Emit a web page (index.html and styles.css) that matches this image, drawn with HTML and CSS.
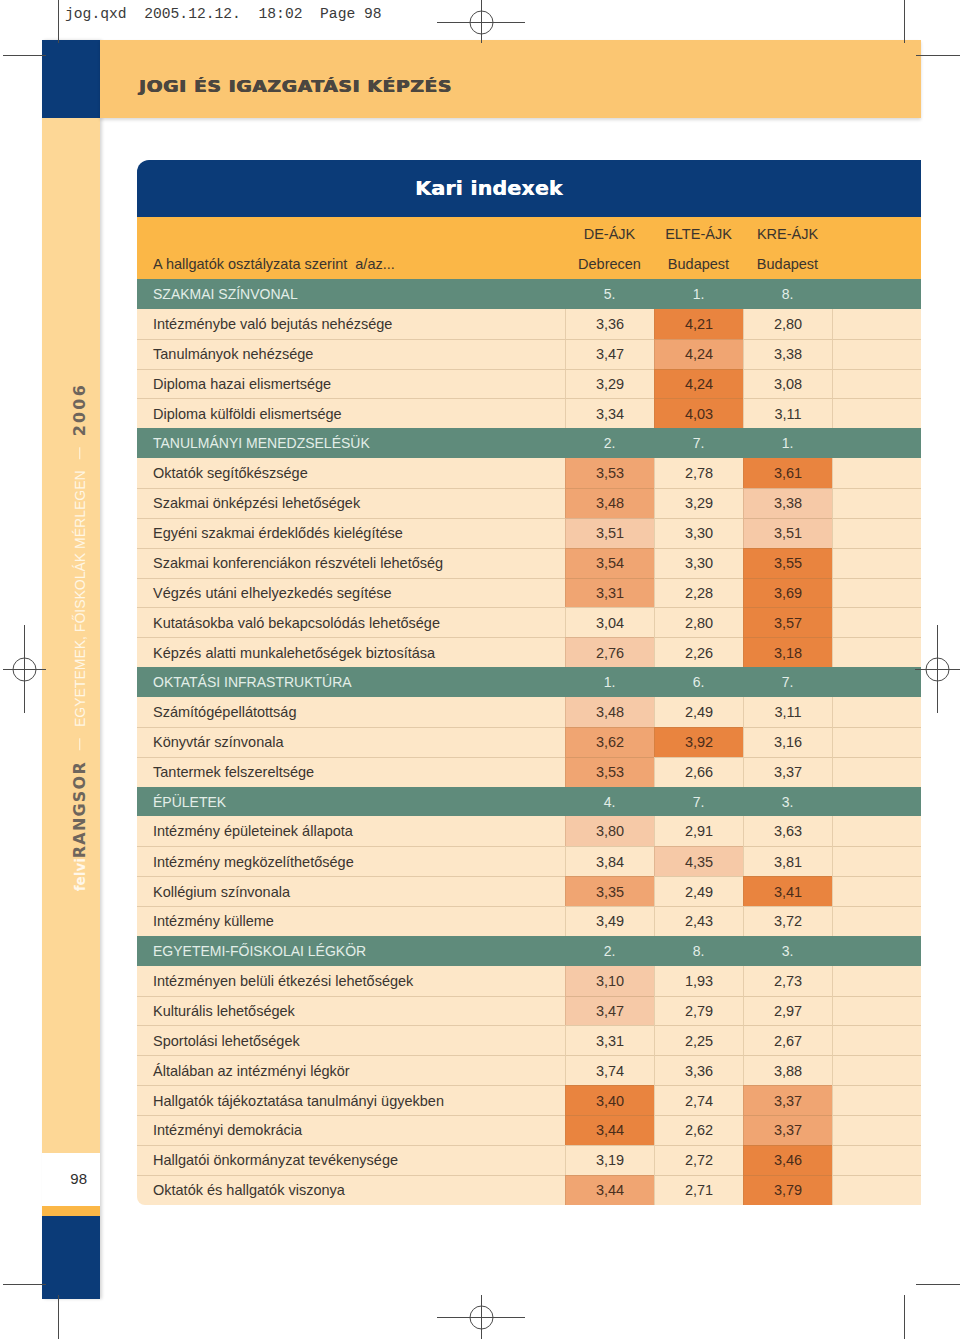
FILE: index.html
```html
<!DOCTYPE html>
<html lang="hu">
<head>
<meta charset="utf-8">
<title>Kari indexek</title>
<link rel="stylesheet" href="styles.css">
</head>
<body>
<div class="page">
  <div class="slug">jog.qxd  2005.12.12.  18:02  Page 98</div>
  <div class="layout">
    <aside class="sidebar">
      <div class="sb-cap"></div>
      <div class="sb-strip">
        <div class="sb-text"><span class="felvi">felvi</span><span class="rang">RANGSOR</span><span class="pipe"></span><span class="egy">EGYETEMEK, FŐISKOLÁK MÉRLEGEN</span><span class="pipe"></span><span class="yr">2006</span></div>
      </div>
      <div class="sb-page">98</div>
      <div class="sb-accent"></div>
      <div class="sb-foot"></div>
    </aside>
    <main class="main">
      <header class="banner"><h1>JOGI ÉS IGAZGATÁSI KÉPZÉS</h1></header>
      <section class="card">
        <div class="card-title"><span>Kari indexek</span></div>
        <div class="thead">
          <div class="row"><span class="label"></span><span>DE-ÁJK</span><span>ELTE-ÁJK</span><span>KRE-ÁJK</span><span></span></div>
          <div class="row"><span class="label">A hallgatók osztályzata szerint  a/az...</span><span>Debrecen</span><span>Budapest</span><span>Budapest</span><span></span></div>
        </div>
        <div class="tbody">
          <div class="row sec"><span class="label">SZAKMAI SZÍNVONAL</span><span>5.</span><span>1.</span><span>8.</span><span></span></div>
          <div class="row item"><span class="label">Intézménybe való bejutás nehézsége</span><span>3,36</span><span class="d">4,21</span><span>2,80</span><span></span></div>
          <div class="row item"><span class="label">Tanulmányok nehézsége</span><span>3,47</span><span class="m">4,24</span><span>3,38</span><span></span></div>
          <div class="row item"><span class="label">Diploma hazai elismertsége</span><span>3,29</span><span class="d">4,24</span><span>3,08</span><span></span></div>
          <div class="row item"><span class="label">Diploma külföldi elismertsége</span><span>3,34</span><span class="d">4,03</span><span>3,11</span><span></span></div>

          <div class="row sec"><span class="label">TANULMÁNYI MENEDZSELÉSÜK</span><span>2.</span><span>7.</span><span>1.</span><span></span></div>
          <div class="row item"><span class="label">Oktatók segítőkészsége</span><span class="m">3,53</span><span>2,78</span><span class="d">3,61</span><span></span></div>
          <div class="row item"><span class="label">Szakmai önképzési lehetőségek</span><span class="m">3,48</span><span>3,29</span><span class="l">3,38</span><span></span></div>
          <div class="row item"><span class="label">Egyéni szakmai érdeklődés kielégítése</span><span class="l">3,51</span><span>3,30</span><span class="l">3,51</span><span></span></div>
          <div class="row item"><span class="label">Szakmai konferenciákon részvételi lehetőség</span><span class="m">3,54</span><span>3,30</span><span class="d">3,55</span><span></span></div>
          <div class="row item"><span class="label">Végzés utáni elhelyezkedés segítése</span><span class="m">3,31</span><span>2,28</span><span class="d">3,69</span><span></span></div>
          <div class="row item"><span class="label">Kutatásokba való bekapcsolódás lehetősége</span><span>3,04</span><span>2,80</span><span class="d">3,57</span><span></span></div>
          <div class="row item"><span class="label">Képzés alatti munkalehetőségek biztosítása</span><span class="l">2,76</span><span>2,26</span><span class="d">3,18</span><span></span></div>

          <div class="row sec"><span class="label">OKTATÁSI INFRASTRUKTÚRA</span><span>1.</span><span>6.</span><span>7.</span><span></span></div>
          <div class="row item"><span class="label">Számítógépellátottság</span><span class="l">3,48</span><span>2,49</span><span>3,11</span><span></span></div>
          <div class="row item"><span class="label">Könyvtár színvonala</span><span class="m">3,62</span><span class="d">3,92</span><span>3,16</span><span></span></div>
          <div class="row item"><span class="label">Tantermek felszereltsége</span><span class="m">3,53</span><span>2,66</span><span>3,37</span><span></span></div>

          <div class="row sec"><span class="label">ÉPÜLETEK</span><span>4.</span><span>7.</span><span>3.</span><span></span></div>
          <div class="row item"><span class="label">Intézmény épületeinek állapota</span><span class="l">3,80</span><span>2,91</span><span>3,63</span><span></span></div>
          <div class="row item"><span class="label">Intézmény megközelíthetősége</span><span>3,84</span><span class="l">4,35</span><span>3,81</span><span></span></div>
          <div class="row item"><span class="label">Kollégium színvonala</span><span class="m">3,35</span><span>2,49</span><span class="d">3,41</span><span></span></div>
          <div class="row item"><span class="label">Intézmény külleme</span><span>3,49</span><span>2,43</span><span>3,72</span><span></span></div>

          <div class="row sec"><span class="label">EGYETEMI-FŐISKOLAI LÉGKÖR</span><span>2.</span><span>8.</span><span>3.</span><span></span></div>
          <div class="row item"><span class="label">Intézményen belüli étkezési lehetőségek</span><span class="l">3,10</span><span>1,93</span><span>2,73</span><span></span></div>
          <div class="row item"><span class="label">Kulturális lehetőségek</span><span class="l">3,47</span><span>2,79</span><span>2,97</span><span></span></div>
          <div class="row item"><span class="label">Sportolási lehetőségek</span><span>3,31</span><span>2,25</span><span>2,67</span><span></span></div>
          <div class="row item"><span class="label">Általában az intézményi légkör</span><span>3,74</span><span>3,36</span><span>3,88</span><span></span></div>
          <div class="row item"><span class="label">Hallgatók tájékoztatása tanulmányi ügyekben</span><span class="d">3,40</span><span>2,74</span><span class="m">3,37</span><span></span></div>
          <div class="row item"><span class="label">Intézményi demokrácia</span><span class="d">3,44</span><span>2,62</span><span class="m">3,37</span><span></span></div>
          <div class="row item"><span class="label">Hallgatói önkormányzat tevékenysége</span><span>3,19</span><span>2,72</span><span class="d">3,46</span><span></span></div>
          <div class="row item"><span class="label">Oktatók és hallgatók viszonya</span><span class="m">3,44</span><span>2,71</span><span class="d">3,79</span><span></span></div>
        </div>
      </section>
    </main>
  </div>
  <svg class="marks" width="960" height="1339" viewBox="0 0 960 1339" aria-hidden="true">
    <g fill="none" stroke="#4a4a4a" stroke-width="1">
      <path d="M58.5 0V43M3 55.5H46M904.5 0V43M916 55.5H960"/>
      <path d="M437 22.5H525M481.5 0V43"/>
      <circle cx="481.5" cy="22.5" r="11.5"/>
      <path d="M3 669.5H46M24.5 625V713"/>
      <circle cx="24.5" cy="669.5" r="11.5"/>
      <path d="M915 669.5H960M937.5 625V713"/>
      <circle cx="937.5" cy="669.5" r="11.5"/>
      <path d="M3 1284.5H46M58.5 1295V1339M916 1284.5H960M904.5 1295V1339"/>
      <path d="M437 1317.5H525M481.5 1295V1339"/>
      <circle cx="481.5" cy="1317.5" r="11.5"/>
    </g>
  </svg>
</div>
</body>
</html>
```
FILE: styles.css
```css
* { box-sizing: border-box; }

body {
  margin: 0;
  background: #ffffff;
  font-family: "Liberation Sans", Arial, sans-serif;
}

.page {
  position: relative;
  width: 960px;
  height: 1339px;
  overflow: hidden;
}

.slug {
  height: 40px;
  padding: 2px 0 0 65px;
  font-family: "Liberation Mono", "DejaVu Sans Mono", monospace;
  font-size: 14.67px;
  line-height: 24px;
  color: #3a3a3a;
  white-space: pre;
}

.layout {
  display: flex;
  padding-left: 42px;
}

/* ---------- sidebar ---------- */
.sidebar {
  width: 58px;
  flex: none;
  display: flex;
  flex-direction: column;
  box-shadow: 2px 0 3px rgba(0, 0, 0, 0.16);
}

.sb-cap { height: 78px; background: #0b3b78; }

.sb-strip {
  height: 1035px;
  background: #fdd796;
  display: flex;
  align-items: center;
  justify-content: center;
  padding: 3px 0 0 22px;
}

.sb-text {
  writing-mode: vertical-rl;
  transform: rotate(180deg);
  white-space: nowrap;
  line-height: 16px;
}

.sb-text span { vertical-align: middle; }

.felvi {
  font-family: "DejaVu Sans", sans-serif;
  font-weight: bold;
  font-size: 13.5px;
  color: #fff7ea;
}

.rang {
  font-family: "DejaVu Sans", sans-serif;
  font-weight: bold;
  font-size: 16px;
  letter-spacing: 1.2px;
  color: #6e655c;
}

.egy {
  font-family: "Liberation Sans", sans-serif;
  font-size: 14px;
  color: #fff6e4;
}

.yr {
  font-family: "DejaVu Sans", sans-serif;
  font-weight: bold;
  font-size: 16px;
  letter-spacing: 2.2px;
  color: #6e655c;
}

.pipe {
  display: inline-block;
  width: 1px;
  height: 12px;
  margin-inline: 11px;
  background: #fff6e4;
}

.sb-page {
  height: 53px;
  background: #ffffff;
  display: flex;
  align-items: center;
  justify-content: flex-end;
  padding: 0 13px 3px 0;
  font-size: 15px;
  color: #2e2e2e;
}

.sb-accent { height: 10px; background: #fbb747; }
.sb-foot { height: 83px; background: #0b3b78; }

/* ---------- main ---------- */
.main {
  width: 821px;
  flex: none;
}

.banner {
  height: 78px;
  background: #fbc672;
  box-shadow: 0 2px 3px rgba(0, 0, 0, 0.15);
  display: flex;
  align-items: center;
  padding: 15px 0 0 39px;
}

.banner h1 {
  margin: 0;
  font-family: "DejaVu Sans", sans-serif;
  font-weight: bold;
  font-size: 15.5px;
  letter-spacing: 0.6px;
  color: #4b4640;
  text-shadow: 0.5px 0 0 #4b4640, -0.3px 0 0 #4b4640;
  transform: scaleX(1.2);
  transform-origin: left center;
  white-space: nowrap;
}

.card {
  margin: 42px 0 0 37px;
  width: 784px;
}

.card-title {
  height: 57px;
  background: #0b3b78;
  border-top-left-radius: 12px;
  display: flex;
  align-items: center;
  padding: 0 0 2px 278px;
  font-family: "DejaVu Sans", sans-serif;
  font-weight: bold;
  font-size: 19px;
  color: #ffffff;
}

.card-title span {
  display: inline-block;
  letter-spacing: 0.2px;
  text-shadow: 0.5px 0 0 #ffffff;
  transform: scaleX(1.08);
  transform-origin: left center;
}

.row {
  display: grid;
  grid-template-columns: 428px repeat(4, 89px);
}

.row > span {
  display: flex;
  align-items: center;
  justify-content: center;
  white-space: pre;
}

.row > .label {
  justify-content: flex-start;
  padding-left: 16px;
}

.thead {
  background: #fbb747;
  padding-top: 2px;
}

.thead .row {
  height: 30px;
  font-size: 14.5px;
  color: #3a342e;
}

.tbody {
  border-bottom-left-radius: 8px;
  overflow: hidden;
}

.tbody .row { height: 29.86px; }

.row.sec {
  background: #5f8b7b;
  color: #e3eee8;
  font-size: 14px;
}

.row.item {
  background: #fde7c8;
  color: #3a3530;
  font-size: 14.5px;
}

.item > span + span { border-left: 1px solid rgba(150, 115, 70, 0.22); }
.item + .item > span { border-top: 1px solid rgba(150, 115, 70, 0.25); }

.item > .d { background: #e9843f; color: #4a2c1a; }
.item > .m { background: #f0a572; color: #4a3020; }
.item > .l { background: #f6c9a7; color: #45352a; }

/* ---------- printer marks overlay ---------- */
.marks {
  position: absolute;
  top: 0;
  left: 0;
  pointer-events: none;
}
```
